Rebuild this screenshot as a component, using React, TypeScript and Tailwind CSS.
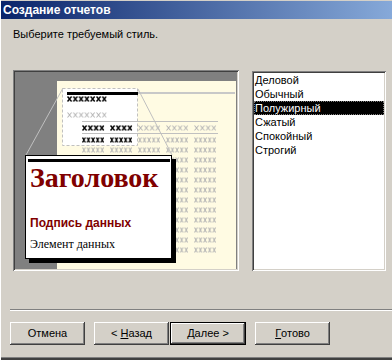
import React from "react"

const raised =
  "shadow-[inset_-1px_-1px_#404040,inset_1px_1px_#ffffff,inset_-2px_-2px_#808080,inset_2px_2px_#d4d0c8]"
const sunken =
  "shadow-[inset_1px_1px_#808080,inset_-1px_-1px_#ffffff,inset_2px_2px_#404040,inset_-2px_-2px_#d4d0c8]"

const styles = ["Деловой", "Обычный", "Полужирный", "Сжатый", "Спокойный", "Строгий"]

const colX = [67, 95, 123, 151, 179]

// a run of greeked "x" marks, as in the thumbnail
function Greek({ x, y, n, wide, dark }: { x: number; y: number; n: number; wide?: boolean; dark?: boolean }) {
  const id = `${dark ? "b" : "g"}${wide ? "w" : "n"}`
  const w = wide ? 5.8 : 4.6
  return <rect x={x} y={y} width={n * w - 1} height={6} fill={`url(#${id})`} />
}

function XPattern({ id, w, color, sw }: { id: string; w: number; color: string; sw: number }) {
  return (
    <pattern id={id} width={w} height={6} patternUnits="userSpaceOnUse">
      <path d={`M0.5 0.5 L${w - 1.3} 5.5 M${w - 1.3} 0.5 L0.5 5.5`} stroke={color} strokeWidth={sw} fill="none" />
    </pattern>
  )
}

function Thumbnail() {
  const grayRows = Array.from({ length: 11 }, (_, i) => 75 + i * 10)
  return (
    <svg className="absolute left-0 top-0" width="222" height="197">
      <defs>
        <XPattern id="bw" w={5.8} color="#000" sw={1.4} />
        <XPattern id="bn" w={4.6} color="#000" sw={1.3} />
        <XPattern id="gw" w={5.8} color="#b4b4b4" sw={1} />
        <XPattern id="gn" w={4.6} color="#b4b4b4" sw={1} />
      </defs>
      <rect x="42" y="9" width="179" height="188" fill="#fffbe3" />
      <rect x="47.5" y="16.5" width="75" height="57" fill="#fff" stroke="#c0c0c0" strokeDasharray="3 2" />
      <rect x="52" y="20" width="71" height="3" fill="#000" />
      <rect x="123" y="20" width="97" height="2" fill="#c8c8c8" />
      <g transform="translate(52 24)">
        <Greek x={0} y={0} n={7} wide dark />
      </g>
      <g transform="translate(52 40)">
        <Greek x={0} y={0} n={7} wide />
      </g>
      <rect x="67" y="49" width="136" height="1" fill="#c0c0c0" />
      <rect x="67" y="61" width="136" height="1" fill="#c0c0c0" />
      {colX.map((x, i) => (
        <g key={"a" + x} transform={`translate(${x} 53)`}>
          <Greek x={0} y={0} n={4} wide dark={i < 2} />
        </g>
      ))}
      {colX.map((x, i) => (
        <g key={"b" + x} transform={`translate(${x} 65)`}>
          <Greek x={0} y={0} n={5} dark={i < 2} />
        </g>
      ))}
      {grayRows.map((y) =>
        colX.map((x) => (
          <g key={y + "-" + x} transform={`translate(${x} ${y})`}>
            <Greek x={0} y={0} n={5} />
          </g>
        ))
      )}
      <line x1="48" y1="16" x2="11" y2="83" stroke="#c0c0c0" strokeWidth="1" />
      <line x1="123" y1="17" x2="157" y2="83" stroke="#c0c0c0" strokeWidth="1" />
    </svg>
  )
}

function Preview() {
  return (
    <div className={`w-[226px] h-[201px] p-[2px] bg-[#d4d0c8] ${sunken}`}>
      <div className="relative w-full h-full bg-[#808080] overflow-hidden">
        <Thumbnail />
        {/* sample card lies over the thumbnail */}
        <div className="absolute left-[10px] top-[83px] w-[147px] h-[104px] bg-white border border-black shadow-[4px_4px_0_#000] flex flex-col">
          <div className="ml-[2px] mr-[1px] mt-[3px] h-[3px] bg-black" />
          <div className="mt-[2px] pl-[4px] font-['Liberation_Serif',serif] font-bold text-[28px] leading-[27px] text-[#800000]">
            Заголовок
          </div>
          <div className="mt-[25px] pl-[4px] font-bold text-[12px] leading-[14px] text-[#800000]">
            Подпись данных
          </div>
          <div className="mt-[7px] pl-[4px] font-['Liberation_Serif',serif] text-[12px] leading-[14px] text-black">
            Элемент данных
          </div>
        </div>
      </div>
    </div>
  )
}

function Button({ children, isDefault }: { children: React.ReactNode; isDefault?: boolean }) {
  if (isDefault) {
    return (
      <div className="w-[76px] h-[23px] border border-black">
        <div className={`w-full h-full flex items-center justify-center text-[11px] ${raised}`}>{children}</div>
      </div>
    )
  }
  return (
    <div className={`w-[75px] h-[23px] flex items-center justify-center text-[11px] ${raised}`}>{children}</div>
  )
}

export default function App() {
  return (
    <div className="w-[392px] h-[360px] bg-[#d4d0c8] border-l border-white flex flex-col font-['Liberation_Sans',Arial,sans-serif] text-black overflow-hidden">
      <div className="mt-[1px] h-[18px] bg-[linear-gradient(to_right,#0a246a,#86a9d9)] pl-[2px] text-white font-bold text-[12px] leading-[18px]">
        Создание отчетов
      </div>
      <div className="mt-[9px] pl-[12px] text-[11px] leading-[13px]">Выберите требуемый стиль.</div>

      <div className="mt-[29px] pl-[12px] flex gap-[13px]">
        <Preview />
        <div className={`mt-[1px] w-[134px] h-[200px] bg-white p-[2px] ${sunken}`}>
          {styles.map((s) => (
            <div
              key={s}
              className={`h-[14px] pl-[1px] text-[11px] leading-[14px] ${
                s === "Полужирный" ? "bg-black text-white outline outline-1 outline-dotted outline-[#808080] -outline-offset-1" : ""
              }`}
            >
              {s}
            </div>
          ))}
        </div>
      </div>

      <div className="mt-[38px] ml-[9px] h-0 border-t border-b border-t-[#808080] border-b-white" />

      <div className="mt-[11px] pl-[9px] flex gap-[9px]">
        <Button>Отмена</Button>
        <div className="flex gap-[1px]">
          <Button>
            &lt;&nbsp;<u className="underline-offset-[1px]">Н</u>азад
          </Button>
          <Button isDefault>
            <u className="underline-offset-[1px]">Д</u>алее&nbsp;&gt;
          </Button>
        </div>
        <Button>
          <u className="underline-offset-[1px]">Г</u>отово
        </Button>
      </div>

      <div className="mt-auto h-[1px] bg-[#808080]" />
      <div className="h-[2px] bg-[#404040]" />
    </div>
  )
}
